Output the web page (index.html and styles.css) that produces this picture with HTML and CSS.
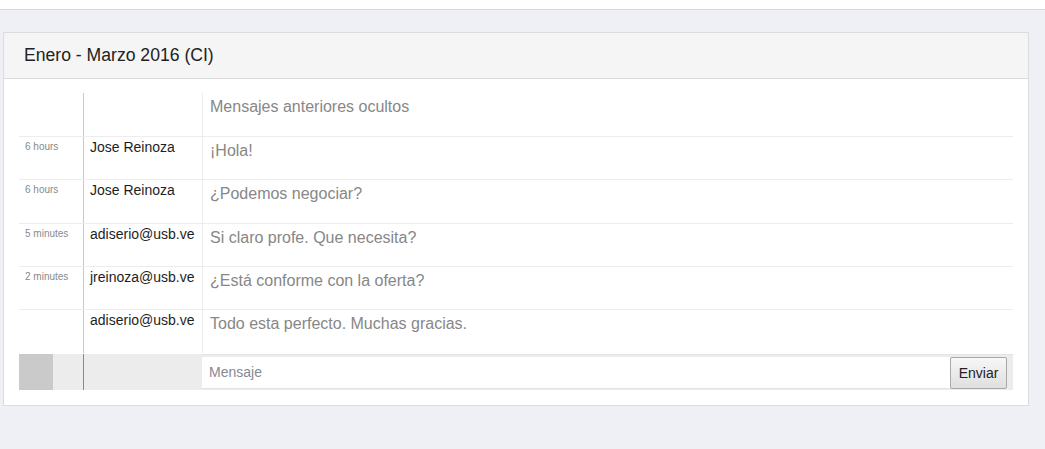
FILE: index.html
```html
<!DOCTYPE html>
<html lang="es">
<head>
<meta charset="utf-8">
<title>Chat</title>
<link rel="stylesheet" href="styles.css">
</head>
<body>
<div class="topbar"></div>
<main class="main">
  <section class="panel">
    <header class="panel-head">Enero - Marzo 2016 (CI)</header>
    <div class="panel-body">
      <div class="chat">
        <div class="row first">
          <div class="c-time"></div>
          <div class="c-name"></div>
          <div class="c-msg">Mensajes anteriores ocultos</div>
        </div>
        <div class="row">
          <div class="c-time">6 hours</div>
          <div class="c-name">Jose Reinoza</div>
          <div class="c-msg">¡Hola!</div>
        </div>
        <div class="row">
          <div class="c-time">6 hours</div>
          <div class="c-name">Jose Reinoza</div>
          <div class="c-msg">¿Podemos negociar?</div>
        </div>
        <div class="row">
          <div class="c-time">5 minutes</div>
          <div class="c-name">adiserio@usb.ve</div>
          <div class="c-msg">Si claro profe. Que necesita?</div>
        </div>
        <div class="row">
          <div class="c-time">2 minutes</div>
          <div class="c-name">jreinoza@usb.ve</div>
          <div class="c-msg">¿Está conforme con la oferta?</div>
        </div>
        <div class="row">
          <div class="c-time"></div>
          <div class="c-name">adiserio@usb.ve</div>
          <div class="c-msg">Todo esta perfecto. Muchas gracias.</div>
        </div>
        <div class="input-row">
          <div class="i-time"><span class="i-dark"></span><span class="i-light"></span></div>
          <div class="i-name"></div>
          <div class="i-msg">
            <input class="msg-input" type="text" placeholder="Mensaje">
            <button class="send" type="button">Enviar</button>
          </div>
        </div>
      </div>
    </div>
  </section>
</main>
</body>
</html>
```

FILE: styles.css
```css
* { box-sizing: border-box; }

html, body {
  margin: 0;
  padding: 0;
  background: #eff0f5;
  font-family: "Liberation Sans", Arial, sans-serif;
  color: #333;
}

.topbar {
  height: 10px;
  background: #fff;
  border-bottom: 1px solid #d9dadd;
}

.main {
  padding: 22px 16px 0 3px;
}

.panel {
  background: #fff;
  border: 1px solid #dcdcdc;
}

.panel-head {
  background: #f5f5f5;
  border-bottom: 1px solid #dcdcdc;
  padding: 10px 20px;
  font-size: 17.6px;
  line-height: 25px;
  color: #222;
}

.panel-body {
  padding: 14px 15px 15px 15px;
}

.chat {
  display: flex;
  flex-direction: column;
}

.row {
  display: flex;
  height: 43.33px;
  border-top: 1px solid #ececec;
}

.row.first {
  border-top: none;
  height: 43px;
}

.c-time {
  width: 64px;
  padding: 3px 0 0 6px;
  font-size: 10px;
  line-height: 14px;
  color: #8a8a8a;
}

.c-name {
  width: 119px;
  border-left: 1px solid #c8c8c8;
  padding: 3px 0 0 6px;
  font-size: 14px;
  line-height: 15px;
  color: #1e1e1e;
}

.c-msg {
  flex: 1;
  border-left: 1px solid #ececec;
  padding: 3px 0 0 7px;
  font-size: 16px;
  line-height: 22px;
  color: #878787;
}

.input-row {
  display: flex;
  height: 36px;
  margin-top: 1px;
  background: #ececec;
}

.i-time {
  width: 64px;
  display: flex;
}

.i-dark {
  width: 34px;
  background: #cacaca;
}

.i-light {
  flex: 1;
}

.i-name {
  width: 119px;
  border-left: 1px solid #8a8a8a;
}

.i-msg {
  flex: 1;
  display: flex;
  align-items: stretch;
  padding: 2px 6px 1px 0;
  border-top: 1px solid #e4e4e4;
}

.msg-input {
  flex: 1;
  min-width: 0;
  margin: 0;
  border: none;
  border-bottom: 1px solid #e4e4e4;
  background: #fff;
  padding: 0 7px;
  font-family: "Liberation Sans", Arial, sans-serif;
  font-size: 14px;
  color: #333;
  outline: none;
}

.msg-input::placeholder {
  color: #858a93;
}

.send {
  width: 57px;
  margin: 0;
  border: 1px solid #a9a9a9;
  border-radius: 2px;
  background: linear-gradient(#f7f7f7, #dfdfdf);
  font-family: "Liberation Sans", Arial, sans-serif;
  font-size: 14px;
  color: #222;
  padding: 0;
}
```
